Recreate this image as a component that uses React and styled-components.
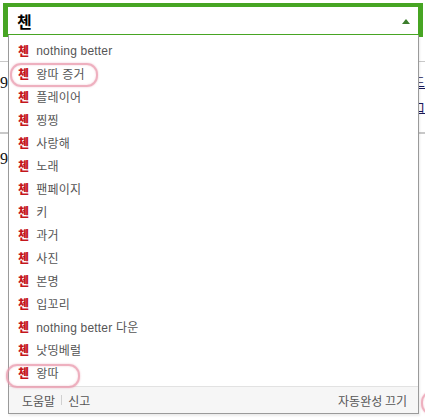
import React from 'react';
import styled, { createGlobalStyle } from 'styled-components';

const suggestions = [
	'nothing better',
	'왕따 증거',
	'플레이어',
	'찡찡',
	'사랑해',
	'노래',
	'팬페이지',
	'키',
	'과거',
	'사진',
	'본명',
	'입꼬리',
	'nothing better 다운',
	'낫띵베럴',
	'왕따',
];

const GlobalStyle = createGlobalStyle`
	html, body {
		margin: 0;
		padding: 0;
		background: #fff;
		font-family: "Liberation Sans", "Noto Sans CJK KR", sans-serif;
	}
`;

const Page = styled.div`
	position: relative;
	width: 425px;
	height: 420px;
	overflow: hidden;
	background: #fff;
`;

/* content of the page that sits under the suggestion box */
const Backdrop = styled.div`
	padding-top: 61px;
`;

const BackSection = styled.div`
	border-top: 1px solid #c8c8c8;
	border-bottom: ${props => (props.$last ? 'none' : '1px solid #c8c8c8')};
	padding: ${props => (props.$last ? '17px 0 0' : '13px 0 16px')};
	display: flex;
	flex-direction: column;
	gap: 9px;
`;

const BackLine = styled.div`
	display: flex;
	justify-content: space-between;
	font-size: 16px;
	line-height: 16px;
	color: #111;
	font-family: "Liberation Serif", "Noto Sans CJK KR", serif;
`;

const BackLink = styled.span`
	color: #1a1a5a;
	text-decoration: underline;
	font-size: 13px;
`;

const SearchFrame = styled.div`
	position: absolute;
	top: 3px;
	left: 3px;
	width: 410px;
	height: 30px;
	border: solid #47a523;
	border-width: 4px 5px 0;
	background: #47a523;
`;

const SearchInput = styled.div`
	height: 27px;
	background: #fff;
	border-bottom: 1px solid #47a523;
	display: flex;
	align-items: center;
	justify-content: space-between;
	padding: 0 8px 0 9px;
	font-size: 16px;
	font-weight: bold;
	color: #000;
	font-family: "Noto Sans CJK KR", sans-serif;
`;

const Arrow = styled.span`
	width: 0;
	height: 0;
	border-left: 4px solid transparent;
	border-right: 4px solid transparent;
	border-bottom: 5px solid #3b7d2c;
	margin-top: 2px;
`;

const Dropdown = styled.div`
	position: absolute;
	top: 35px;
	left: 8px;
	width: 409px;
	background: #fff;
	border: 1px solid #9a9a9a;
	border-top: none;
	box-shadow: 1px 2px 2px rgba(0, 0, 0, 0.08);
`;

const List = styled.ul`
	list-style: none;
	margin: 0;
	padding: 4px 0 2px;
`;

const Item = styled.li`
	height: 23px;
	display: flex;
	align-items: center;
	padding-left: 9px;
	gap: 7px;
	font-size: 12px;
	color: #555;
	font-family: "Liberation Sans", "Noto Sans CJK KR", sans-serif;
	letter-spacing: 0.2px;
`;

const Prefix = styled.b`
	color: #c4161c;
	font-size: 12px;
	font-family: "Noto Sans CJK KR", sans-serif;
	font-weight: 900;
`;

const Footer = styled.div`
	height: 26px;
	border-top: 1px solid #e2e2e2;
	background: #f6f6f6;
	display: flex;
	align-items: center;
	justify-content: space-between;
	padding: 0 11px 0 13px;
	font-size: 12px;
	color: #555;
	font-family: "Noto Sans CJK KR", sans-serif;
`;

const FooterLinks = styled.div`
	display: flex;
	align-items: center;
	gap: 6px;
`;

const Divider = styled.span`
	width: 1px;
	height: 10px;
	background: #d0d0d0;
`;

/* pink hand-drawn highlight marks */
const Mark = styled.div`
	position: absolute;
	border: 2px solid rgba(232, 150, 170, 0.75);
	border-radius: 11px;
	box-shadow: 0 0 2px rgba(232, 150, 170, 0.6), inset 0 0 2px rgba(232, 150, 170, 0.5);
	pointer-events: none;
`;

export default function App() {
	return (
		<>
			<GlobalStyle />
			<Page>
				<Backdrop>
					<BackSection>
						<BackLine>
							<span>9</span>
							<BackLink>드</BackLink>
						</BackLine>
						<BackLine>
							<span>&nbsp;</span>
							<BackLink>ロ</BackLink>
						</BackLine>
					</BackSection>
					<BackSection $last>
						<BackLine>
							<span>9</span>
							<span />
						</BackLine>
					</BackSection>
				</Backdrop>

				<SearchFrame>
					<SearchInput>
						<span>첸</span>
						<Arrow />
					</SearchInput>
				</SearchFrame>

				<Dropdown>
					<List>
						{suggestions.map(text => (
							<Item key={text}>
								<Prefix>첸</Prefix>
								<span>{text}</span>
							</Item>
						))}
					</List>
					<Footer>
						<FooterLinks>
							<span>도움말</span>
							<Divider />
							<span>신고</span>
						</FooterLinks>
						<span>자동완성 끄기</span>
					</Footer>
				</Dropdown>

				<Mark style={{ left: 10, top: 63, width: 84, height: 20 }} />
				<Mark style={{ left: 6, top: 364, width: 70, height: 20 }} />
				<Mark style={{ left: 421, top: 391, width: 30, height: 20 }} />
			</Page>
		</>
	);
}
